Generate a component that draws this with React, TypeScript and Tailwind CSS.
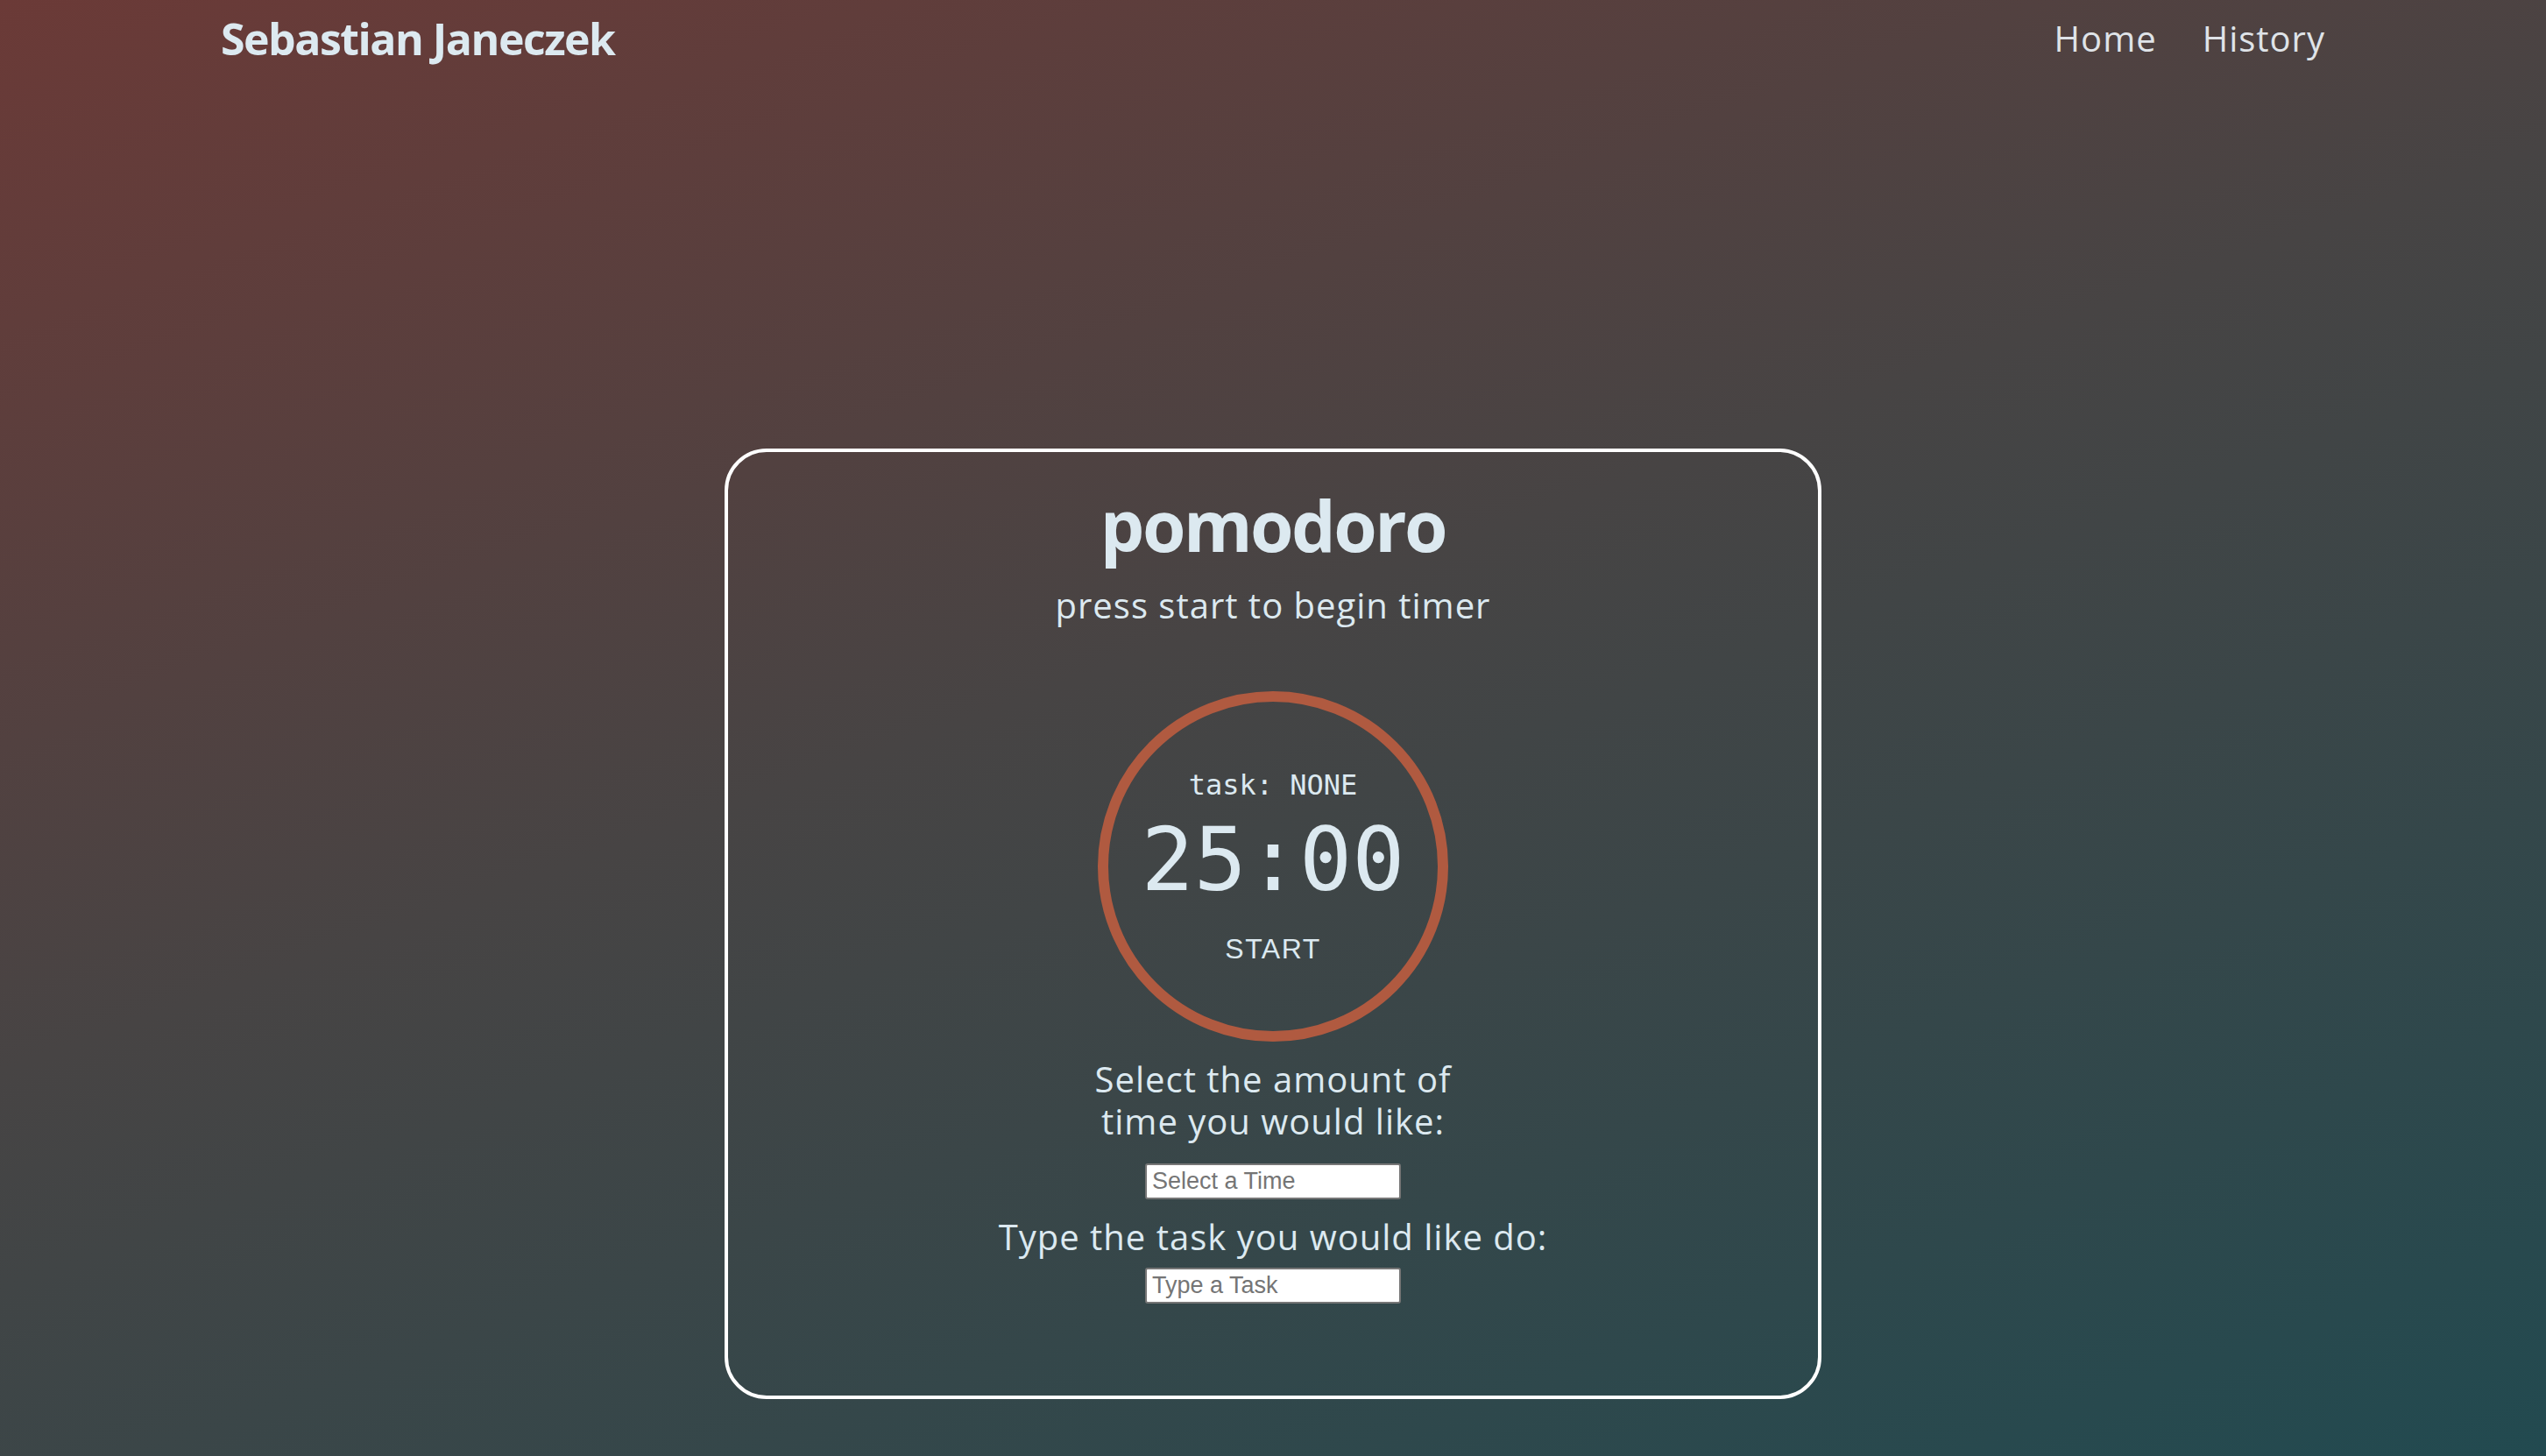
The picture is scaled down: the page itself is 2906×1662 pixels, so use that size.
export default function App() {
  return (
    <div className="min-h-screen w-full bg-[linear-gradient(160deg,#6b3a37_0%,#474444_45%,#224a50_100%)] font-['Open_Sans',sans-serif] text-[#dce9f0]">
      {/* Header */}
      <header className="flex h-[100px] items-start justify-between px-[252px] pt-[19px]">
        <a className="text-[50px] font-bold leading-none tracking-[-1.5px]">Sebastian Janeczek</a>
        <nav className="flex gap-[52px] pt-[5px] text-[40px] leading-none tracking-[1px] text-[#dfe3e8]">
          <a>Home</a>
          <a>History</a>
        </nav>
      </header>

      {/* Timer card */}
      <main className="mx-auto mt-[412px] flex h-[1085px] w-[1252px] flex-col items-center rounded-[48px] border-[4px] border-white">
        <h1 className="mt-[43px] text-[80px] font-bold leading-none tracking-[-2.5px]">pomodoro</h1>
        <p className="mt-[32px] text-[40px] leading-none tracking-[1px]">press start to begin timer</p>

        <div className="mt-[78px] flex h-[400px] w-[400px] flex-col items-center justify-center rounded-full border-[12px] border-[#b05a40]">
          <span className="font-['DejaVu_Sans_Mono',monospace] text-[32px] leading-none">task: NONE</span>
          <span className="mt-[20px] font-['DejaVu_Sans_Mono',monospace] text-[100px] leading-none">25:00</span>
          <button className="mt-[35px] font-['Liberation_Sans',sans-serif] text-[32px] leading-none tracking-[1.5px] text-[#dce9f0]">START</button>
        </div>

        <p className="mt-[19px] w-[480px] text-center text-[40px] leading-[48px] tracking-[1px]">
          Select the amount of time you would like:
        </p>
        <input
          placeholder="Select a Time"
          className="mt-[24px] h-[41px] w-[292px] rounded-[3px] border-2 border-[#767676] bg-white px-[6px] font-['Liberation_Sans',sans-serif] text-[27px] text-black placeholder:text-[#757575]"
        />
        <p className="mt-[20px] text-center text-[40px] leading-[46px] tracking-[1px]">Type the task you would like do:</p>
        <input
          placeholder="Type a Task"
          className="mt-[12px] h-[41px] w-[292px] rounded-[3px] border-2 border-[#767676] bg-white px-[6px] font-['Liberation_Sans',sans-serif] text-[27px] text-black placeholder:text-[#757575]"
        />
      </main>
    </div>
  );
}
